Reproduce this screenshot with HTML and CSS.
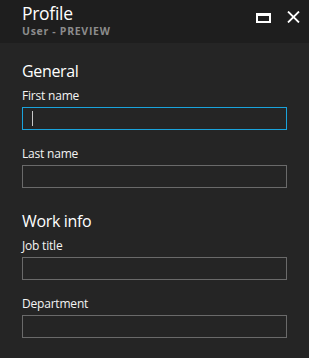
FILE: index.html
```html
<!DOCTYPE html>
<html lang="en">
<head>
<meta charset="utf-8">
<title>Profile</title>
<link rel="stylesheet" href="styles.css">
</head>
<body>
<div class="blade">
  <header class="blade-header">
    <div class="titles">
      <h1 class="title">Profile</h1>
      <div class="subtitle">User - PREVIEW</div>
    </div>
    <div class="controls">
      <button class="ctrl" aria-label="Maximize">
        <svg width="15" height="10" viewBox="0 0 15 10"><rect x="1" y="1.5" width="13" height="7.5" fill="none" stroke="#fff" stroke-width="2"/><rect x="0" y="0" width="15" height="3" fill="#fff"/></svg>
      </button>
      <button class="ctrl" aria-label="Close">
        <svg width="13" height="12" viewBox="0 0 13 12"><path d="M1 0.5 L12 11.5 M12 0.5 L1 11.5" stroke="#fff" stroke-width="1.8" fill="none"/></svg>
      </button>
    </div>
  </header>
  <main class="blade-content">
    <section class="section">
      <h2 class="section-title">General</h2>
      <div class="field">
        <label class="label">First name</label>
        <div class="input focused"><span class="caret"></span></div>
      </div>
      <div class="field">
        <label class="label">Last name</label>
        <div class="input"></div>
      </div>
    </section>
    <section class="section">
      <h2 class="section-title">Work info</h2>
      <div class="field">
        <label class="label">Job title</label>
        <div class="input"></div>
      </div>
      <div class="field">
        <label class="label">Department</label>
        <div class="input"></div>
      </div>
    </section>
  </main>
</div>
</body>
</html>
```

FILE: styles.css
```css
* { box-sizing: border-box; }
html, body {
  margin: 0;
  padding: 0;
  background: #252525;
}
body {
  font-family: "Open Sans", "Noto Sans", sans-serif;
  color: #f0f0f0;
  width: 309px;
  height: 358px;
  overflow: hidden;
}
.blade-header {
  background: #1e1e1e;
  height: 43px;
  display: flex;
  justify-content: space-between;
  align-items: flex-start;
  padding: 2px 0 0 22px;
}
.title {
  margin: 0;
  font-size: 17.5px;
  line-height: 22px;
  font-weight: 400;
  letter-spacing: -0.3px;
  color: #ffffff;
}
.subtitle {
  margin-top: 1px;
  font-size: 10.5px;
  line-height: 13px;
  font-weight: 700;
  letter-spacing: 0.7px;
  color: #8c8c8c;
}
.controls {
  display: flex;
  align-items: flex-start;
  padding-top: 9px;
  padding-right: 9px;
}
.ctrl {
  background: none;
  border: 0;
  padding: 0;
  margin: 0;
  display: block;
}
.ctrl svg { display: block; }
.ctrl:first-child { margin-top: 2px; margin-right: 16px; }
.blade-content {
  padding: 17px 22px 0 22px;
}
.section + .section { margin-top: 22px; }
.section-title {
  margin: 0;
  font-size: 16px;
  line-height: 22px;
  font-weight: 400;
  letter-spacing: -0.35px;
  color: #ffffff;
}
.field { margin-top: 16px; }
.section-title + .field { margin-top: 6px; }
.label {
  display: block;
  font-size: 12px;
  line-height: 16px;
  font-weight: 400;
  letter-spacing: -0.2px;
  color: #f4f4f4;
  margin-bottom: 3px;
}
.input {
  height: 23px;
  border: 1px solid #6a6a6a;
  background: #252525;
  position: relative;
}
.input.focused { border-color: #1aa3dc; }
.caret {
  position: absolute;
  left: 9px;
  top: 3px;
  width: 1px;
  height: 15px;
  background: #c8c8c8;
}
```
